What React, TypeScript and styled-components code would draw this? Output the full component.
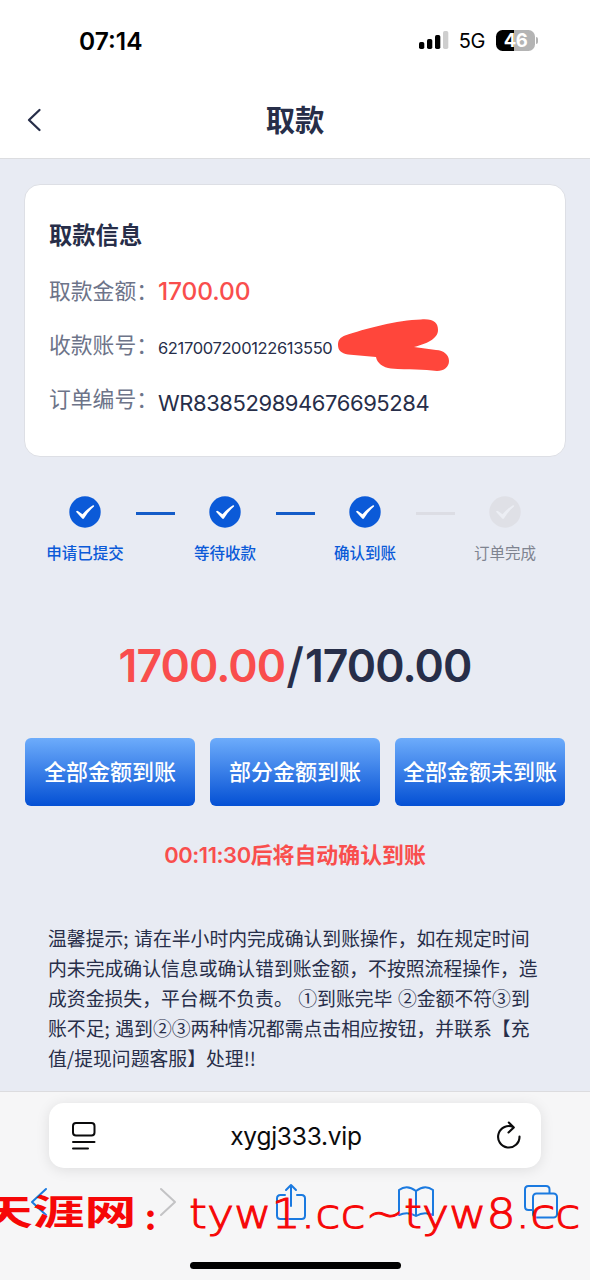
import React from "react";
import styled, { createGlobalStyle } from "styled-components";

const latin = `Inter, "Noto Sans CJK SC", sans-serif`;
const navy = "#272e49";
const slate = "#6d7489";
const blue = "#0b5ad8";
const red = "#f94e4d";

const GlobalStyle = createGlobalStyle`
  * { box-sizing: border-box; }
  body { margin: 0; background: #e8ebf3; font-family: ${latin}; color: ${navy}; }
`;

const Screen = styled.div`
  position: relative;
  width: 590px;
  height: 1280px;
  display: flex;
  flex-direction: column;
  overflow: hidden;
  white-space: nowrap;
  background: #e8ebf3;
`;

const StatusBar = styled.div`
  height: 80px;
  flex: none;
  background: #fff;
  display: flex;
  align-items: center;
  justify-content: space-between;
  padding: 0 52px 0 79px;
  color: #000;
`;

const Clock = styled.span`
  font-size: 24.5px;
  font-weight: 600;
  letter-spacing: 0;
  padding-top: 1px;
`;

const StatusIcons = styled.div`
  display: flex;
  align-items: center;
`;

const Network = styled.span`
  font-size: 20px;
  padding-top: 2px;
  margin: 0 11px 0 10px;
  letter-spacing: -0.4px;
`;

const Battery = styled.div`
  width: 39px;
  height: 21px;
  border-radius: 6.5px;
  background: linear-gradient(90deg, #000 46%, #b4b4b4 46%);
  color: #fff;
  font-size: 18.5px;
  font-weight: 700;
  letter-spacing: -0.5px;
  line-height: 21px;
  text-align: center;
`;

const BatteryTip = styled.div`
  width: 2px;
  height: 7px;
  margin-left: 1px;
  border-radius: 0 2px 2px 0;
  background: #b4b4b4;
`;

const Header = styled.header`
  height: 79px;
  flex: none;
  background: #fff;
  border-bottom: 1px solid #dcdde0;
  display: grid;
  grid-template-columns: 60px 1fr 60px;
  align-items: center;
  padding-top: 2px;
`;

const Back = styled.svg`
  margin-left: 27px;
  display: block;
`;

const Title = styled.h1`
  margin: 2px 0 0;
  text-align: center;
  font-size: 29.3px;
  font-weight: 600;
  line-height: 40px;
`;

const Card = styled.section`
  flex: none;
  height: 273px;
  margin: 25px 24px 0;
  padding: 31px 24px 0;
  background: #fff;
  border: 1px solid #dddfe5;
  border-radius: 16px;
`;

const CardTitle = styled.h2`
  margin: 0 0 8px;
  font-size: 23.3px;
  line-height: 40px;
  font-weight: 700;
`;

const InfoRow = styled.div`
  height: 54px;
  display: flex;
  align-items: center;
`;

const Label = styled.span`
  width: 109px;
  font-size: 21.8px;
  line-height: 40px;
  color: ${slate};
`;

const Value = styled.span<{ $size: number; $space: number; $color?: string; $weight?: number; $drop?: number }>`
  font-size: ${(p) => p.$size}px;
  letter-spacing: ${(p) => p.$space}px;
  color: ${(p) => p.$color ?? navy};
  font-weight: ${(p) => p.$weight ?? 400};
  line-height: 30px;
  padding-top: ${(p) => p.$drop ?? 0}px;
`;

const Scribble = styled.svg`
  position: absolute;
  left: 336px;
  top: 316px;
`;

const Steps = styled.div`
  flex: none;
  display: flex;
  padding: 39px 34.5px 0;
  height: 113px;
`;

const Step = styled.div<{ $done: boolean }>`
  width: 101px;
  flex: none;
  display: flex;
  flex-direction: column;
  align-items: center;
  font-size: 15.5px;
  line-height: 24px;
  gap: 14px;
  font-weight: ${(p) => (p.$done ? 500 : 400)};
  color: ${(p) => (p.$done ? blue : "#7f8490")};
`;

const StepLine = styled.div<{ $done: boolean }>`
  width: 39px;
  height: 3px;
  margin-top: 16px;
  background: ${(p) => (p.$done ? "#145cc8" : "#dcdde4")};
`;

const Amount = styled.div`
  flex: none;
  height: 64px;
  margin-top: 65px;
  display: flex;
  justify-content: center;
  font-size: 44.5px;
  line-height: 62px;
  font-weight: 600;
  letter-spacing: -0.9px;
`;

const Danger = styled.span`
  color: ${red};
`;

const Slash = styled.span`
  font-size: 48px;
  font-weight: 500;
  letter-spacing: 0;
  margin: 0 1px 0 1px;
`;

const Actions = styled.div`
  flex: none;
  display: grid;
  grid-template-columns: repeat(3, 170px);
  gap: 15px;
  padding: 0 25px;
  margin-top: 39px;
`;

const Action = styled.button`
  height: 68px;
  padding: 0 0 4px;
  border: 0;
  border-radius: 6px;
  background: linear-gradient(#6dacfb, #0450d4);
  color: #fff;
  font: 500 22px ${latin};
  white-space: nowrap;
`;

const Countdown = styled.div`
  flex: none;
  margin-top: 34px;
  text-align: center;
  font-size: 21.9px;
  line-height: 30px;
  font-weight: 600;
  color: ${red};
`;

const Timer = styled.span`
  letter-spacing: -0.4px;
`;

const Notice = styled.p`
  flex: none;
  margin: 53px 0 0 48px;
  font-size: 18.83px;
  line-height: 30.1px;
  word-spacing: 1.3px;
  height: 168px;
  font-family: "Noto Sans CJK SC", sans-serif;
`;

const Line = styled.span`
  display: block;
`;

const Browser = styled.footer`
  flex: 1;
  background: #f6f6f7;
  border-top: 1px solid #dcdcdf;
  padding: 11px 49px 0;
`;

const AddressBar = styled.div`
  height: 65px;
  border-radius: 15px;
  background: #fff;
  box-shadow: 0 2px 14px rgba(0, 0, 0, 0.1);
  display: flex;
  align-items: center;
  justify-content: space-between;
  padding: 0 19px 0 22px;
  color: #0b0b0c;
  font-size: 24.5px;
  letter-spacing: -0.25px;
`;

const Tools = styled.div`
  display: grid;
  grid-template-columns: repeat(5, 125px);
  justify-items: center;
  align-items: center;
  margin: 12px -71px 0;
  height: 44px;
`;

const HomeIndicator = styled.div`
  width: 211px;
  height: 7px;
  margin: 38px auto 0;
  border-radius: 4px;
  background: #000;
`;

const Watermark = styled.div`
  position: absolute;
  left: -19px;
  top: 1184px;
  height: 56px;
  color: #f60707;
  line-height: 56px;
`;

const MarkName = styled.span`
  position: absolute;
  left: 0;
  top: -2px;
  font-family: "Noto Sans CJK SC", sans-serif;
  font-size: 35px;
  font-weight: 700;
  transform: scaleX(1.48);
  transform-origin: left;
`;

const MarkDots = styled.span`
  position: absolute;
  left: 163px;
  top: 5px;
  font-family: "Liberation Serif", serif;
  font-size: 40px;
  font-weight: 700;
`;

const MarkSite = styled.span`
  position: absolute;
  left: 208px;
  top: 2px;
  font-family: "DejaVu Sans", sans-serif;
  font-weight: 200;
  font-size: 40px;
  -webkit-text-stroke: 1px #f60707;
  transform: scaleX(1.145);
  transform-origin: left;
`;

const CheckIcon = ({ done }: { done: boolean }) => (
  <svg width="32" height="32" viewBox="0 0 32 32">
    <circle cx="16" cy="16" r="15.7" fill={done ? blue : "#dfe0e6"} />
    <path d="M7 15.800 Q8 14 9.200 15.200 L13.500 18.300 Q18.500 12.500 24 9.300 Q25.500 9 25 10.400 Q19.500 15 14.900 22.600 Q14 23.500 13.200 22.600 Z" fill={done ? "#fff" : "#eceef4"} />
  </svg>
);

const steps = [
  { label: "申请已提交", done: true },
  { label: "等待收款", done: true },
  { label: "确认到账", done: true },
  { label: "订单完成", done: false },
];

const notice = [
  "温馨提示; 请在半小时内完成确认到账操作，如在规定时间",
  "内未完成确认信息或确认错到账金额，不按照流程操作，造",
  "成资金损失，平台概不负责。 ①到账完毕 ②金额不符③到",
  "账不足; 遇到②③两种情况都需点击相应按钮，并联系【充",
  "值/提现问题客服】处理!!",
];

const tool = { fill: "none", stroke: "#1b7ae0", strokeWidth: 2, strokeLinecap: "round", strokeLinejoin: "round" } as const;

export default function App() {
  return (
    <Screen>
      <GlobalStyle />
      <StatusBar>
        <Clock>07:14</Clock>
        <StatusIcons>
          <svg width="30" height="20" viewBox="0 0 30 20">
            <rect x="0" y="12" width="5.3" height="7" rx="1.7" />
            <rect x="8" y="9" width="5.3" height="10" rx="1.7" />
            <rect x="16" y="5" width="5.3" height="14" rx="1.7" />
            <rect x="24" y="1" width="5.3" height="18" rx="1.7" fill="#cecece" />
          </svg>
          <Network>5G</Network>
          <Battery>46</Battery>
          <BatteryTip />
        </StatusIcons>
      </StatusBar>
      <Header>
        <Back width="16" height="24" viewBox="0 0 16 24" fill="none" stroke={navy} strokeWidth="2.3" strokeLinecap="round" strokeLinejoin="round">
          <path d="M12.500 2 2 12 12.500 22" />
        </Back>
        <Title>取款</Title>
      </Header>

      <Card>
        <CardTitle>取款信息</CardTitle>
        <InfoRow>
          <Label>取款金额：</Label>
          <Value $size={24.5} $space={-0.1} $color={red} $weight={500}>1700.00</Value>
        </InfoRow>
        <InfoRow>
          <Label>收款账号：</Label>
          <Value $size={16.5} $space={-0.36} $drop={5}>6217007200122613550</Value>
        </InfoRow>
        <InfoRow>
          <Label>订单编号：</Label>
          <Value $size={22} $space={-0.43} $drop={8}>WR838529894676695284</Value>
        </InfoRow>
      </Card>
      <Scribble width="116" height="58" viewBox="0 0 116 58">
        <path fill="#ff463b" d="M9 19.500 C28 13 62 4 85 3.500 C98 2.500 102 7 102 14 C102 23 90 28 78 31 L100 34 C108 34.500 113 39 113 45 C113 51 108 55 101 55 C88 53 73 54 55 52.500 C47 51.500 41 47 40 41 L12 38.500 C5 37.500 2 34 2 29 C2 24 4 21.500 9 19.500Z" />
      </Scribble>

      <Steps>
        {steps.map((s, i) => (
          <React.Fragment key={s.label}>
            {i > 0 && <StepLine $done={s.done} />}
            <Step $done={s.done}>
              <CheckIcon done={s.done} />
              {s.label}
            </Step>
          </React.Fragment>
        ))}
      </Steps>

      <Amount>
        <Danger>1700.00</Danger>
        <Slash>/</Slash>
        <span>1700.00</span>
      </Amount>

      <Actions>
        <Action>全部金额到账</Action>
        <Action>部分金额到账</Action>
        <Action>全部金额未到账</Action>
      </Actions>
      <Countdown>
        <Timer>00:11:30</Timer>后将自动确认到账
      </Countdown>

      <Notice>
        {notice.map((l) => (
          <Line key={l}>{l}</Line>
        ))}
      </Notice>

      <Browser>
        <AddressBar>
          <svg width="25" height="30" viewBox="0 0 25 30" fill="none" stroke="#0b0b0c" strokeWidth="2" strokeLinecap="round">
            <rect x="2" y="2" width="21.5" height="12.5" rx="3" />
            <path d="M2 21H23.500M2 27.500H17" />
          </svg>
          <span>xygj333.vip</span>
          <svg width="26" height="30" viewBox="0 0 26 30" fill="none" stroke="#0b0b0c" strokeWidth="2.1" strokeLinecap="round" strokeLinejoin="round">
            <path d="M23.500 15.500A10.700 10.700 0 1 1 17.500 6.200M12.800 1.500 17.800 6.500 12.500 11.500" />
          </svg>
        </AddressBar>
        <Tools>
          <svg width="22" height="30" viewBox="0 0 22 30" {...tool}>
            <path d="M16 2 2 15 16 28" />
          </svg>
          <svg width="22" height="30" viewBox="0 0 22 30" {...tool} stroke="#c3c3c5">
            <path d="M6 2 20 15 6 28" />
          </svg>
          <svg width="32" height="40" viewBox="0 0 32 40" {...tool}>
            <path d="M10 13H5.500Q2 13 2 16.500V33.500Q2 37 5.500 37H26.500Q30 37 30 33.500V16.500Q30 13 26.500 13H22M16 24V3M11 8 16 3 21 8" />
          </svg>
          <svg width="38" height="34" viewBox="0 0 38 34" {...tool}>
            <path d="M19 6Q10 -1 2 5V30Q11 26 19 31Q27 26 36 30V5Q28 -1 19 6V31" />
          </svg>
          <svg width="36" height="36" viewBox="0 0 36 36" {...tool}>
            <path d="M9 26H5.500Q2 26 2 22.500V5.500Q2 2 5.500 2H23Q26.500 2 26.500 5.500V9" />
            <rect x="10" y="9.5" width="24" height="24" rx="3.5" />
          </svg>
        </Tools>
        <HomeIndicator />
      </Browser>

      <Watermark>
        <MarkName>天涯网</MarkName>
        <MarkDots>:</MarkDots>
        <MarkSite>tyw1.cc~tyw8.cc</MarkSite>
      </Watermark>
    </Screen>
  );
}
